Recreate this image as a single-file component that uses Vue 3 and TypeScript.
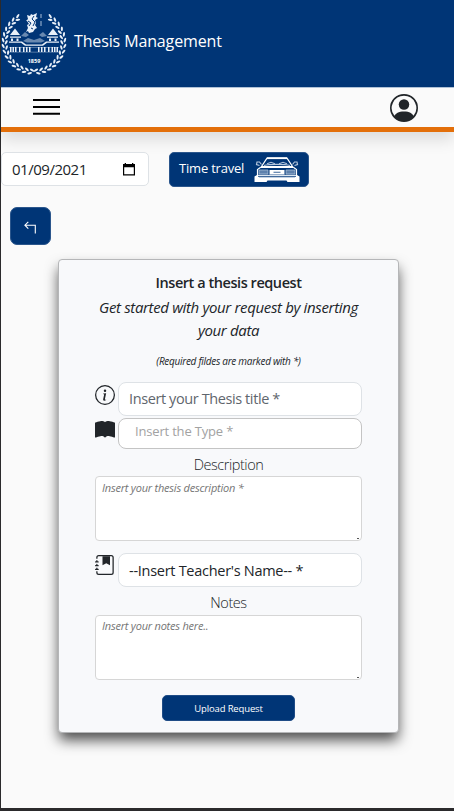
<script setup lang="ts">
import { ref } from 'vue'

interface Leaf { x: number; y: number; turn: number }

const leaves: Leaf[] = []
for (let i = 0; i < 14; i++) {
  const deg = 94 + i * 10.8
  for (const side of [1, -1]) {
    for (const layer of [0, 1]) {
      const a = ((deg + layer * 4) * Math.PI) / 180
      const r = layer ? 31 : 27.8
      const x = 33 + side * Math.cos(a) * r
      const y = 30.5 + Math.sin(a) * r
      const t = deg + 90 + (layer ? -20 : 28)
      leaves.push({ x, y, turn: side === 1 ? t : 180 - t })
    }
  }
}

const windows = [9, 11.5, 14, 18, 22, 25, 28, 37, 40, 43, 47, 50.5, 53, 55.5]
const date = ref('01/09/2021')
const title = ref('')
const kind = ref('')
const description = ref('')
const notes = ref('')
</script>

<template>
  <div class="page">
    <header class="brand">
      <svg class="crest" width="66" height="64" viewBox="0 0 66 64">
        <g fill="#e9f0f8">
          <ellipse v-for="(l, i) in leaves" :key="i" :cx="l.x" :cy="l.y" rx="2.4" ry="1.05"
            :transform="`rotate(${l.turn} ${l.x} ${l.y})`" />
          <path d="M26 3l3 1 1-2 2 1 4-2-1 4 2 1-3 2 1 3-1 2 2 3-2 1-2 3-4 1-1-2-2 1 2-4-1-3 2-1-2-3-1 0 2-2z" />
          <path d="M40 2v4M40 9v5" stroke="#a9bfd8" stroke-width="1" />
          <path d="M14 16.500l5 6.500H9zM52 16.500l5 6.500H47z" />
          <path d="M9 24.500h11v1.200H9zM46 24.500h11v1.200H46z" />
          <path d="M20 24l4-4 4 3-3 2zM46 24l-4-4-4 3 3 2z" opacity=".45" />
          <path d="M22 29l5-3 6 2 6-2 5 3-4 1.500H26z" opacity=".45" />
          <path d="M8 29.500h13l4 3h16l4-3h13v1.200H46l-4 3H24l-4-3H8z" />
          <path d="M8 35h50v.8H8zM8 39.800h50v.8H8z" opacity=".45" />
          <rect v-for="w in windows" :key="w" :x="w" y="35" width="1.500" height="5" />
          <path d="M10 26.500h2v2.500h-2zM15.500 26.500h2v2.500h-2zM48 26.500h2v2.500h-2zM53.500 26.500h2v2.500h-2z" />
        </g>
        <path d="M27 9l3 2-2 3M33 4l-2 3 3 3-2 4M30 16l2 1" fill="none" stroke="#003576" stroke-width="1" />
        <text x="33" y="50.5" text-anchor="middle">1859</text>
      </svg>
      <span class="brand-name">Thesis Management</span>
    </header>

    <nav class="bar">
      <svg class="menu" width="27" height="18" viewBox="0 0 27 18" stroke="#000" stroke-width="2">
        <path d="M0 2h27M0 9h27M0 15.700h27" />
      </svg>
      <svg class="user" width="28" height="28" viewBox="0 0 16 16" fill="#212529">
        <path d="M11 6a3 3 0 1 1-6 0 3 3 0 0 1 6 0z" />
        <path fill-rule="evenodd" d="M0 8a8 8 0 1 1 16 0A8 8 0 0 1 0 8zm8-7a7 7 0 0 0-5.468 11.370C3.242 11.226 4.805 10 8 10s4.757 1.225 5.468 2.370A7 7 0 0 0 8 1z" />
      </svg>
    </nav>

    <div class="tools">
      <div class="date">
        <span>{{ date }}</span>
        <svg width="12" height="13" viewBox="0 0 12 13">
          <path fill="#000" fill-rule="evenodd" d="M0 1h1.700V0H3v1h6V0h1.300v1H12v11.500H0zM1.200 4.200v7.100h9.600V4.200z" />
        </svg>
      </div>
      <button class="travel" type="button">
        <span>Time travel</span>
        <svg width="46" height="26" viewBox="0 0 46 26" fill="none" stroke="#fff" stroke-width="1.2">
          <path d="M7.500 9.500L13 1.200h20l5.500 8.300" />
          <path d="M13 1.200h20" stroke-width="1.800" />
          <path d="M10 8.500c5-1.500 21-1.500 26 0" stroke="#b4c6dc" />
          <path d="M13 6.800l4-1.500 4 1.500M25 6.800l4-1.500 4 1.500" stroke="#aabfd8" />
          <path d="M7.500 7.500L5.500 5H3L2.500 7.500l3 1M38.500 7.500l2-2.500H43l.5 2.500-3 1" stroke="#b4c6dc" />
          <path d="M7 10h32" stroke-width="2" />
          <path d="M7 10l-3.500 2.500V20M39 10l3.500 2.500V20" />
          <path d="M4 18.500h38" stroke="#dce6f1" stroke-width="1.500" />
          <path d="M5 13h9v4H5zM32 13h9v4h-9z" fill="#5d80ac" stroke="#a7bdd6" stroke-width=".8" />
          <path d="M15.500 13h15v4.500h-15z" fill="#fff" stroke="none" />
          <path d="M19.500 15.300h7" stroke="#5d80ac" />
          <path d="M.5 19.500L3 18l1 2h38l1-2 2.500 1.500V25H33.500l-1-1.500H13.500l-1 1.500H.5z" fill="#fff" stroke="none" />
          <path d="M5 20.200h36" stroke="#6f8fb7" stroke-width=".6" />
        </svg>
      </button>
    </div>

    <button class="back" type="button" aria-label="Back">
      <svg width="13" height="13" viewBox="0 0 13 13" fill="none" stroke="#fff" stroke-width="1.1">
        <path d="M4.300 .8L.9 4.200l3.400 3.400M1 4.200h10.300v8.300" />
      </svg>
    </button>

    <form class="card">
      <h1>Insert a thesis request</h1>
      <p class="lead">Get started with your request by inserting<br>your data</p>
      <p class="hint">(Required fildes are marked with *)</p>

      <div class="row">
        <svg class="icon" width="20" height="20" viewBox="0 0 16 16" fill="#212529">
          <path d="M8 15A7 7 0 1 1 8 1a7 7 0 0 1 0 14zm0 1A8 8 0 1 0 8 0a8 8 0 0 0 0 16z" />
          <path d="m8.930 6.588-2.290.287-.082.380.450.083c.294.070.352.176.288.469l-.738 3.468c-.194.897.105 1.319.808 1.319.545 0 1.178-.252 1.465-.598l.088-.416c-.200.176-.492.246-.686.246-.275 0-.375-.193-.304-.533L8.930 6.588zM9 4.500a1 1 0 1 1-2 0 1 1 0 0 1 2 0z" />
        </svg>
        <input v-model="title" class="field title" placeholder="Insert your Thesis title *">
      </div>
      <div class="row second">
        <svg class="icon" width="20" height="20" viewBox="0 0 16 16" fill="#212529">
          <path d="M8 1.783C7.015.936 5.587.810 4.287.940c-1.514.153-3.042.672-3.994 1.105A.5.5 0 0 0 0 2.500v11a.5.5 0 0 0 .707.455c.882-.400 2.303-.881 3.680-1.020 1.409-.142 2.590.087 3.223.877a.5.5 0 0 0 .780 0c.633-.790 1.814-1.019 3.222-.877 1.378.139 2.800.620 3.681 1.020A.5.5 0 0 0 16 13.500v-11a.5.5 0 0 0-.293-.455c-.952-.433-2.480-.952-3.994-1.105C10.413.809 8.985.936 8 1.783z" />
        </svg>
        <input v-model="kind" class="field type" placeholder="Insert the Type *">
      </div>

      <label class="caption desc">Description</label>
      <div class="area">
        <textarea v-model="description" placeholder="Insert your thesis description *" />
        <i class="grip" />
      </div>

      <div class="row third">
        <svg class="icon" width="20" height="20" viewBox="0 0 16 16" fill="#212529">
          <path d="M6 1h6v7.200L9 6.500 6 8.200z" />
          <path d="M3 0h10a2 2 0 0 1 2 2v12a2 2 0 0 1-2 2H3a2 2 0 0 1-2-2v-1h1v1a1 1 0 0 0 1 1h10a1 1 0 0 0 1-1V2a1 1 0 0 0-1-1H3a1 1 0 0 0-1 1v1H1V2a2 2 0 0 1 2-2z" />
          <path d="M1 5v-.5a.5.5 0 0 1 1 0V5h.5a.5.5 0 0 1 0 1h-2a.5.5 0 0 1 0-1H1zm0 3v-.5a.5.5 0 0 1 1 0V8h.5a.5.5 0 0 1 0 1h-2a.5.5 0 0 1 0-1H1zm0 3v-.5a.5.5 0 0 1 1 0v.5h.5a.5.5 0 0 1 0 1h-2a.5.5 0 0 1 0-1H1z" />
        </svg>
        <div class="field teacher">--Insert Teacher's Name-- *</div>
      </div>

      <label class="caption notes">Notes</label>
      <div class="area">
        <textarea v-model="notes" class="raised" placeholder="Insert your notes here.." />
        <i class="grip" />
      </div>
      <button class="upload" type="button">Upload Request</button>
    </form>
  </div>
</template>

<style>
body { overflow: hidden; }
</style>

<style scoped>
* { box-sizing: border-box; }
.page {
  height: 811px;
  border-left: 1px solid #2b2a2c;
  border-bottom: 3px solid #2b2a2c;
  background: #fafafa;
  color: #212529;
  font-family: "Open Sans", "Noto Sans", sans-serif;
  font-size: 15px;
}
button, input, textarea { font-family: inherit; margin: 0; }
svg { display: block; flex: none; }
.brand {
  height: 87px;
  background: #003576;
  display: flex;
  align-items: center;
  gap: 7px;
  color: #fff;
}
.crest text { fill: #fff; font-size: 5.500px; font-weight: 700; }
.brand-name { font-size: 16px; letter-spacing: -.13px; white-space: nowrap; padding-bottom: 5px; }
.bar {
  height: 45px;
  display: flex;
  justify-content: space-between;
  align-items: center;
  padding: 0 36px 0 32px;
  border-top: 1px solid #afc1d7;
  border-bottom: 5px solid #e36f0a;
  box-shadow: 0 8px 16px rgba(0, 0, 0, .12);
}
.menu { margin-bottom: 1px; }
.user { margin-top: 1px; }
.tools { display: flex; align-items: flex-start; gap: 19.500px; padding-top: 20px; }
.date {
  width: 148px;
  height: 34px;
  border: 1px solid #dee2e6;
  border-radius: 5px;
  background: #fff;
  display: flex;
  align-items: center;
  justify-content: space-between;
  padding: 0 13px 0 10px;
  letter-spacing: -.48px;
}
.travel {
  width: 140px;
  height: 35px;
  border: 1px solid #2b568c;
  border-radius: 5px;
  background: #003576;
  color: #fff;
  font-size: 13px;
  font-weight: 500;
  letter-spacing: -.2px;
  padding: 0 8px 0 9.500px;
  display: flex;
  align-items: center;
  justify-content: space-between;
  white-space: nowrap;
}
.travel span { padding-bottom: 3px; }
.back {
  width: 41px;
  height: 38px;
  margin: 20px 0 0 9.400px;
  padding: 3px 0 0;
  border: 1px solid #2b568c;
  border-radius: 7px;
  background: #003576;
  display: flex;
  align-items: center;
  justify-content: center;
}
.card {
  width: 341px;
  height: 474px;
  margin: 14px 0 0 57px;
  padding: 13px 36px 0;
  border: 1px solid #b5b6b8;
  border-radius: 4px;
  background: #f8f9fb;
  box-shadow: 0 8px 14px -1px rgba(0, 0, 0, .7);
  display: flex;
  flex-direction: column;
}
h1 { margin: 0; font-size: 14.500px; line-height: 20px; font-weight: 600; letter-spacing: -.45px; text-align: center; white-space: nowrap; }
.lead { margin: 3px -10px 0; line-height: 23px; font-style: italic; letter-spacing: -.35px; text-align: center; white-space: nowrap; }
.hint { margin: 11px 0 1px; font-size: 10px; line-height: 16px; font-style: italic; letter-spacing: -.28px; text-align: center; white-space: nowrap; }
.row { display: flex; gap: 3px; margin-top: 12px; height: 34px; }
.icon { margin-top: 3px; }
.second { margin-top: 2px; height: 31px; }
.second .icon { margin-top: 2px; }
.third .icon { margin-top: 2px; }
.field {
  flex: 1;
  min-width: 0;
  height: 34px;
  border: 1px solid #dee2e6;
  border-radius: 8px;
  background: #fff;
  padding: 0 10px;
  font-size: 14.500px;
  color: #212529;
}
.field::placeholder { color: #5f666d; opacity: 1; }
.title { letter-spacing: -.4px; padding-bottom: 2px; }
.type { height: 31px; border-color: #c4c4c4; font-size: 13px; letter-spacing: -.18px; padding: 0 16px 5px; }
.type::placeholder { color: #a2a2a2; }
.teacher { line-height: 33px; letter-spacing: -.28px; white-space: nowrap; }
.caption { text-align: center; font-size: 14.500px; font-weight: 300; letter-spacing: -.45px; line-height: 20px; }
.desc, .notes { margin: 6px 0 1px; }
.notes { margin-bottom: 2px; }
.area { position: relative; height: 65px; }
textarea {
  display: block;
  width: 267px;
  height: 65px;
  resize: none;
  border: 1px solid #d6d6d6;
  border-radius: 4px;
  padding: 2px 6px;
  font-size: 11px;
  letter-spacing: -.22px;
  line-height: 17px;
  font-style: italic;
}
.raised { padding-top: 1px; }
textarea::placeholder { color: #757575; opacity: 1; }
.grip { position: absolute; right: 3px; bottom: 2px; width: 2px; height: 1px; background: #555; }
.upload {
  align-self: center;
  width: 133px;
  height: 26px;
  margin-top: 15px;
  padding: 0;
  border: 1px solid #1f4c86;
  border-radius: 5px;
  background: #003576;
  color: #fff;
  font-size: 9.500px;
  letter-spacing: -.15px;
  font-weight: 500;
}
</style>
